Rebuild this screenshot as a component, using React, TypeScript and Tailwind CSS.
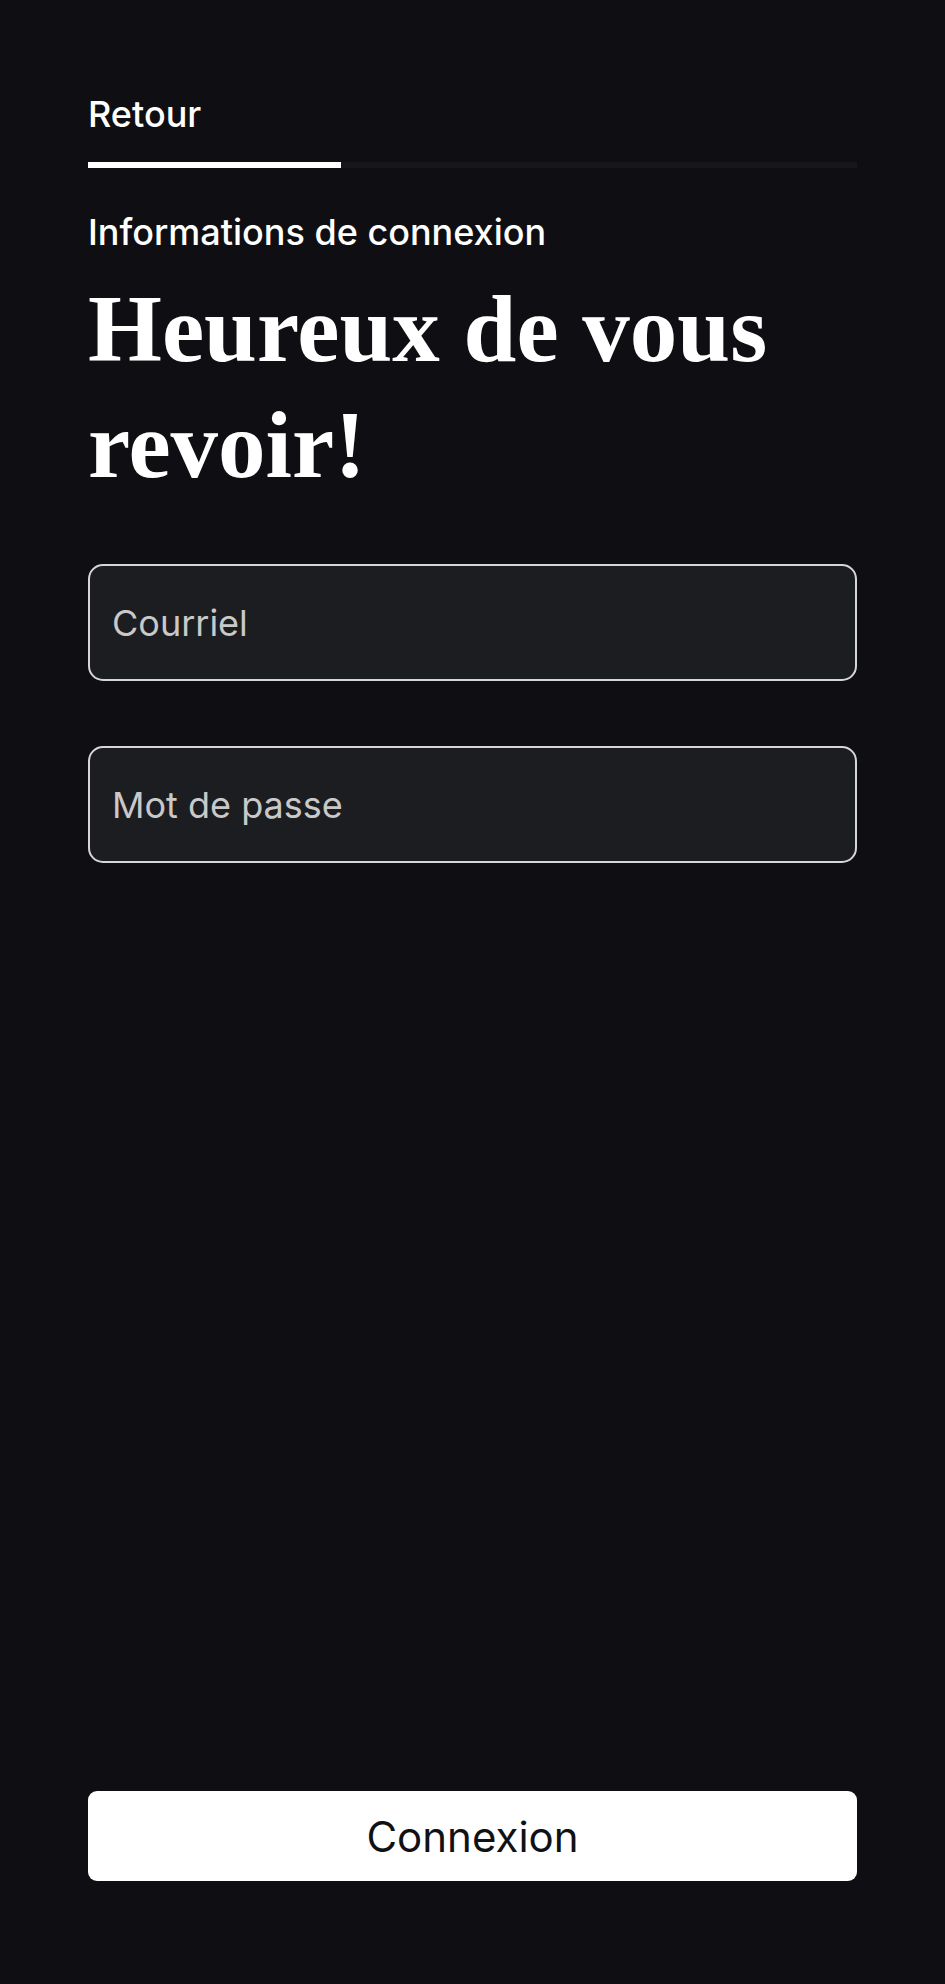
export default function App() {
  return (
    <div className="flex min-h-screen flex-col bg-[#0f0f13] px-[88px] pb-[103px] pt-[94px] font-['Inter',sans-serif] text-white">
      {/* Back link + step progress */}
      <button className="self-start text-left text-[36px] font-medium leading-[40px]">Retour</button>
      <div className="mt-[28px] flex h-[6px] w-full bg-[#16161b]">
        <div className="h-full w-[253px] bg-white" />
      </div>

      <p className="mt-[44px] text-[36px] font-medium leading-[40px]">Informations de connexion</p>
      <h1 className="mt-[19px] font-['Liberation_Serif',serif] text-[95px] font-bold leading-[116px]">
        Heureux de vous
        <br />
        revoir!
      </h1>

      <form className="mt-[61px] flex flex-col gap-[65px]">
        <input
          type="email"
          placeholder="Courriel"
          className="h-[117px] w-full rounded-[15px] border-2 border-[#d6d6d6] bg-[#1c1d20] pl-[22px] text-[36px] text-white outline-none placeholder:text-[#c9c9c9]"
        />
        <input
          type="password"
          placeholder="Mot de passe"
          className="h-[117px] w-full rounded-[15px] border-2 border-[#d6d6d6] bg-[#1c1d20] pl-[22px] text-[36px] text-white outline-none placeholder:text-[#c9c9c9]"
        />
      </form>

      <button className="mt-auto h-[90px] w-full rounded-[9px] bg-white text-[42px] text-[#111114]">
        Connexion
      </button>
    </div>
  );
}
